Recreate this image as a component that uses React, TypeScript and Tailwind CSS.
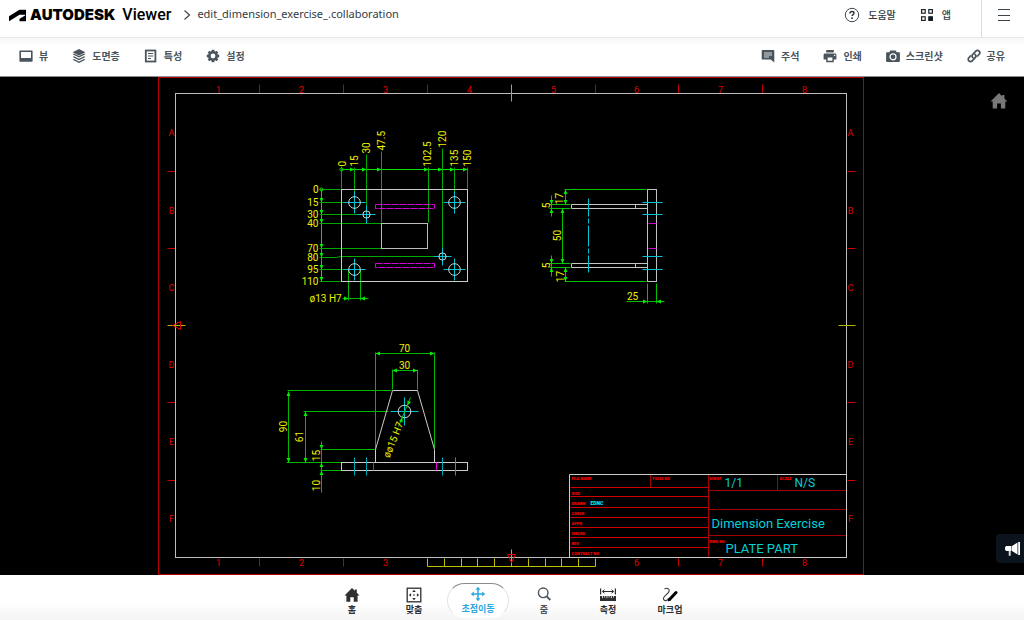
import React from "react";

type Pt = { x: number; y: number };

/* ---------- drawing helpers ---------- */

function Arrow({ x, y, r }: Pt & { r: number }) {
  return <path d="M0 0L-4.5 1.9V-1.9z" transform={`translate(${x} ${y}) rotate(${r})`} className="fill-[#00f000] stroke-none" />;
}

function Dim({ x, y, children, rotate = 0, anchor = "middle" }: Pt & { children: string; rotate?: number; anchor?: "start" | "middle" | "end" }) {
  return (
    <text transform={`translate(${x} ${y}) rotate(${rotate})`} dy="3" textAnchor={anchor} className="fill-[#f0f000] stroke-none font-['Roboto',sans-serif] text-[10px]">
      {children}
    </text>
  );
}

function Hole({ x, y, r, arm }: Pt & { r: number; arm: number }) {
  return (
    <g>
      <path d={`M${x - arm} ${y}H${x + arm}M${x} ${y - arm}V${y + arm}`} className="stroke-[#00c4d0]" />
      <circle cx={x} cy={y} r={r} className="stroke-[#d8d8d8]" />
    </g>
  );
}

const columns = [218, 301, 385, 469, 553, 636, 720, 804];
const rows = [132, 210, 287, 364, 441, 518];
const letters = ["A", "B", "C", "D", "E", "F"];

function SheetFrame() {
  return (
    <g>
      <rect x="158" y="77" width="705" height="497" className="stroke-[#b80000]" />
      <path d="M259 84V93M343 84V93M427 84V93M595 84V93M678 84V93M762 84V93" className="stroke-[#c00000]" />
      <path d="M259 558V566M343 558V566M678 558V566M762 558V566" className="stroke-[#c00000]" />
      <path d="M167 171H175M167 248H175M167 402H175M167 480H175M847 171H855M847 248H855M847 402H855M847 480H855" className="stroke-[#d00000]" />
      <rect x="175" y="93" width="671" height="464" className="stroke-[#bcbcbc]" />
      <path d="M511 84V101M167 325H185M838 325H855M511 549V566" className="stroke-[#b4b400]" />
      <path d="M427 558V566H595V558M444 558V566M461 558V566M477 558V566M494 558V566M528 558V566M545 558V566M561 558V566M578 558V566" className="stroke-[#c0c000]" />
      <path d="M172 325L180 321V329zM511 562L507 554H515z" className="stroke-[#e00000]" />
      <g className="fill-[#e00000] stroke-none font-['Roboto',sans-serif] text-[9px]">
        {columns.map((x, i) => (
          <text key={x} x={x} y="92" textAnchor="middle">{i + 1}</text>
        ))}
        {columns.map((x, i) => (i === 3 || i === 4 ? null : <text key={x} x={x} y="565" textAnchor="middle">{i + 1}</text>))}
        {rows.map((y, i) => (
          <React.Fragment key={y}>
            <text x="171" y={y + 3} textAnchor="middle">{letters[i]}</text>
            <text x="850" y={y + 3} textAnchor="middle">{letters[i]}</text>
          </React.Fragment>
        ))}
      </g>
    </g>
  );
}

function TopView() {
  return (
    <g>
      <path d="M341 169H467M321 189V281" className="stroke-[#00e000]" />
      <path
        d="M341 166V188M354 167V194M366 154V206M381 151V222M428 167V222M442 148V248M454 167V194M467 167V188M319 189H340M319 202H346M319 214H358M319 223H381M319 248H381M319 257H336L340 256H434M319 269H346M319 281H340"
        className="stroke-[#00a800]"
      />
      <path d="M348 269V300M360 269V300M342 298H368" className="stroke-[#00b800]" />
      <circle cx="341" cy="169" r="1.6" className="stroke-[#00e000]" />
      <circle cx="321" cy="189" r="1.6" className="stroke-[#00e000]" />
      {[354, 366, 381, 428, 442, 454, 467].map((x) => <Arrow key={x} x={x} y={169} r={0} />)}
      {[202, 214, 223, 248, 257, 269, 281].map((y) => <Arrow key={y} x={321} y={y} r={90} />)}
      <Arrow x={348} y={298} r={0} />
      <Arrow x={360} y={298} r={180} />
      <rect x="341" y="189" width="126" height="92" className="stroke-[#cccccc]" />
      <rect x="381" y="223" width="46" height="25" className="stroke-[#bcbcbc]" />
      <path d="M375 204H434V208H375zM375 263H434V267H375z" strokeDasharray="7 1" className="stroke-[#d800d8]" />
      <Hole x={354} y={202} r={5.8} arm={11} />
      <Hole x={454} y={202} r={5.8} arm={11} />
      <Hole x={354} y={269} r={5.8} arm={11} />
      <Hole x={454} y={269} r={5.8} arm={11} />
      <Hole x={366} y={214} r={3.6} arm={9} />
      <Hole x={442} y={256} r={3.6} arm={9} />
      <Dim x={342} y={166} rotate={-90} anchor="start">0</Dim>
      <Dim x={354} y={166} rotate={-90} anchor="start">15</Dim>
      <Dim x={366} y={153} rotate={-90} anchor="start">30</Dim>
      <Dim x={381} y={150} rotate={-90} anchor="start">47.5</Dim>
      <Dim x={427} y={166} rotate={-90} anchor="start">102.5</Dim>
      <Dim x={442} y={147} rotate={-90} anchor="start">120</Dim>
      <Dim x={454} y={166} rotate={-90} anchor="start">135</Dim>
      <Dim x={467} y={166} rotate={-90} anchor="start">150</Dim>
      <Dim x={318} y={189} anchor="end">0</Dim>
      <Dim x={318} y={202} anchor="end">15</Dim>
      <Dim x={318} y={214} anchor="end">30</Dim>
      <Dim x={318} y={223} anchor="end">40</Dim>
      <Dim x={318} y={248} anchor="end">70</Dim>
      <Dim x={318} y={257} anchor="end">80</Dim>
      <Dim x={318} y={269} anchor="end">95</Dim>
      <Dim x={318} y={281} anchor="end">110</Dim>
      <Dim x={309} y={298} anchor="start">ø13 H7</Dim>
    </g>
  );
}

function SideView() {
  return (
    <g>
      <path d="M564 189H646M564 281H646M551 195V216M551 255V276M549 204H570M549 208H570M549 263H570M549 267H570M562 208V263M565 189V204M565 267V281M647 283V303M656 283V303M626 301H664" className="stroke-[#00c000]" />
      <Arrow x={565} y={189} r={-90} />
      <Arrow x={565} y={204} r={90} />
      <Arrow x={551} y={204} r={90} />
      <Arrow x={551} y={208} r={-90} />
      <Arrow x={562} y={208} r={-90} />
      <Arrow x={562} y={263} r={90} />
      <Arrow x={551} y={263} r={90} />
      <Arrow x={551} y={267} r={-90} />
      <Arrow x={565} y={267} r={-90} />
      <Arrow x={565} y={281} r={90} />
      <Arrow x={647} y={301} r={0} />
      <Arrow x={656} y={301} r={180} />
      <path d="M571 204H647M571 208H647M571 204V208M635 204V208M571 263H647M571 267H647M571 263V267M635 263V267" className="stroke-[#c4c4c4]" />
      <rect x="647" y="189" width="9" height="92" className="stroke-[#c0c0c0]" />
      <path d="M588 198V216M588 218V223M588 225V246M588 248V253M588 255V272M642 202H662M642 214H662M642 256H662M642 269H662" className="stroke-[#00c4d0]" />
      <path d="M648 223H656M648 248H656" className="stroke-[#d800d8]" />
      <Dim x={559} y={198} rotate={-90}>17</Dim>
      <Dim x={546} y={205} rotate={-90}>5</Dim>
      <Dim x={557} y={235} rotate={-90}>50</Dim>
      <Dim x={546} y={265} rotate={-90}>5</Dim>
      <Dim x={560} y={276} rotate={-90}>17</Dim>
      <Dim x={632} y={296}>25</Dim>
    </g>
  );
}

function FrontView() {
  return (
    <g>
      <path d="M375 353H434M375 352V449M434 352V448M392 370H417M392 369V389M417 369V389M288 391V462M287 390H391M305 411V462M303 411H388M286 462H341M321 441V492M320 449H375M320 470H341" className="stroke-[#00b800]" />
      <Arrow x={375} y={353} r={180} />
      <Arrow x={434} y={353} r={0} />
      <Arrow x={392} y={370} r={180} />
      <Arrow x={417} y={370} r={0} />
      <Arrow x={288} y={391} r={-90} />
      <Arrow x={288} y={462} r={90} />
      <Arrow x={305} y={411} r={-90} />
      <Arrow x={305} y={462} r={90} />
      <Arrow x={321} y={449} r={90} />
      <Arrow x={321} y={462} r={-90} />
      <Arrow x={321} y={470} r={-90} />
      <path d="M375 462V449L392 390H417L434 449V462" className="stroke-[#cccccc]" />
      <rect x="341" y="462" width="126" height="8" className="stroke-[#cccccc]" />
      <Hole x={404} y={411} r={6.3} arm={14} />
      <path d="M398 426L410 397" className="stroke-[#00c800]" />
      <Arrow x={402} y={417} r={-68} />
      <Arrow x={407} y={405} r={112} />
      <path d="M354 457V475M366 457V475M442 457V475M455 457V475" className="stroke-[#00aab4]" />
      <path d="M373 462V470M436 462V470" className="stroke-[#d800d8]" />
      <Dim x={404} y={348}>70</Dim>
      <Dim x={404} y={365}>30</Dim>
      <Dim x={283} y={426} rotate={-90}>90</Dim>
      <Dim x={299} y={436} rotate={-90}>61</Dim>
      <Dim x={316} y={455} rotate={-90}>15</Dim>
      <Dim x={316} y={485} rotate={-90}>10</Dim>
      <Dim x={386} y={457} rotate={-68} anchor="start">øø15 H7</Dim>
    </g>
  );
}

const blockLabels: { x: number; y: number; t: string }[] = [
  { x: 571, y: 479, t: "FILE NAME" },
  { x: 652, y: 479, t: "FSCM NO" },
  { x: 709, y: 479, t: "SHEET" },
  { x: 779, y: 479, t: "SCALE" },
  { x: 571, y: 494, t: "SIZE" },
  { x: 571, y: 504, t: "DRAWN" },
  { x: 571, y: 514, t: "CHECK" },
  { x: 571, y: 524, t: "APPR." },
  { x: 571, y: 534, t: "ISSUED" },
  { x: 571, y: 544, t: "REV" },
  { x: 571, y: 554, t: "CONTRACT NO" },
  { x: 709, y: 542, t: "DWG NO" },
];

function TitleBlock() {
  return (
    <g>
      <path d="M570 487H708M570 496H708M570 507H708M570 517H708M570 527H708M570 537H708M570 547H708" className="stroke-[#d00000]" />
      <path d="M708 474V557M650 474V487M777 474V490M708 490H846M708 509H846M708 535H846" className="stroke-[#a40000]" />
      <path d="M569 557V474H846V557z" className="stroke-[#cccccc]" />
      <g className="fill-[#ff0000] stroke-none font-['Roboto',sans-serif] text-[4px] font-black">
        {blockLabels.map((l) => (
          <text key={l.t} x={l.x} y={l.y}>{l.t}</text>
        ))}
      </g>
      <text x="590" y="504" className="fill-[#00f0f0] stroke-none font-['Roboto',sans-serif] text-[5px] font-black">EDNC</text>
      <g className="fill-[#00d0d8] stroke-none font-['Roboto',sans-serif]">
        <text x="724" y="486" className="text-[12px]">1/1</text>
        <text x="794" y="486" className="text-[12px]">N/S</text>
        <text x="711" y="527" className="text-[13px]">Dimension Exercise</text>
        <text x="725" y="552" className="text-[13px]">PLATE PART</text>
      </g>
    </g>
  );
}

function Drawing() {
  return (
    <svg viewBox="0 77 1024 498" className="h-full w-full" role="img" aria-label="Dimension Exercise">
      <g transform="translate(0.5 0.5)" className="fill-none" strokeWidth="1">
        <SheetFrame />
        <TopView />
        <SideView />
        <FrontView />
        <TitleBlock />
      </g>
    </svg>
  );
}

/* ---------- icons ---------- */

const I = "h-[14px] w-[14px] shrink-0";

const ViewIcon = () => (
  <svg viewBox="0 0 14 14" className={I}><path fillRule="evenodd" d="M1 1.5h12a.6.6 0 0 1 .6.6v10a.6.6 0 0 1-.6.6H1a.6.6 0 0 1-.6-.6v-10a.6.6 0 0 1 .6-.6zM2 3v6h10V3z" fill="currentColor" /></svg>
);
const LayersIcon = () => (
  <svg viewBox="0 0 14 14" className={I} fill="currentColor"><path d="M7 0l6.4 3.2L7 6.4.6 3.2z" /><path d="M.6 5.3L2 4.6l5 2.5 5-2.5 1.4.7L7 8.5z" /><path d="M.6 8L2 7.3l5 2.5 5-2.5 1.4.7L7 11.2z" /><path d="M.6 10.7L2 10l5 2.5 5-2.5 1.4.7L7 13.9z" /></svg>
);
const PropsIcon = () => (
  <svg viewBox="0 0 14 14" className={I} fill="none" stroke="currentColor"><rect x="1.8" y="1.5" width="9.6" height="11" strokeWidth="1.8" /><path d="M4 4.5h5.2M4 7h5.2M4 9.5h3" strokeWidth="1.2" /></svg>
);
const GearIcon = () => (
  <svg viewBox="0 0 14 14" className={I}><g fill="currentColor"><rect x="5.6" y=".8" width="2.8" height="12.4" /><rect x="5.6" y=".8" width="2.8" height="12.4" transform="rotate(45 7 7)" /><rect x="5.6" y=".8" width="2.8" height="12.4" transform="rotate(90 7 7)" /><rect x="5.6" y=".8" width="2.8" height="12.4" transform="rotate(135 7 7)" /><circle cx="7" cy="7" r="4.9" /></g><circle cx="7" cy="7" r="2.4" fill="#fff" /></svg>
);
const CommentIcon = () => (
  <svg viewBox="0 0 14 14" className={I}><path d="M1.4 1h11.2a.7.7 0 0 1 .7.7v11.9L9.6 10.6H1.4a.7.7 0 0 1-.7-.7V1.7a.7.7 0 0 1 .7-.7z" fill="currentColor" /><path d="M3 4h8M3 6h8M3 8h5" stroke="#fff" strokeWidth=".8" /></svg>
);
const PrintIcon = () => (
  <svg viewBox="0 0 14 14" className={I}><path fill="currentColor" fillRule="evenodd" d="M3.2 1h7.6v2.6H3.2zM2 4.4h10c.8 0 1.4.6 1.4 1.4v4.6h-2.6v2.8H3.2v-2.8H.6V5.8C.6 5 1.2 4.4 2 4.4zM4.6 8.6v3.2h4.8V8.6zM11 5.8v1.2h1.2V5.8z" /></svg>
);
const CameraIcon = () => (
  <svg viewBox="0 0 14 14" className={I}><path d="M4.3 1.5h5.4l1 1.7h2.3c.5 0 .9.4.9.9v8c0 .5-.4.9-.9.9H1c-.5 0-.9-.4-.9-.9v-8c0-.5.4-.9.9-.9h2.3z" fill="currentColor" /><circle cx="7" cy="7.8" r="3" fill="none" stroke="#fff" strokeWidth="1.2" /></svg>
);
const LinkIcon = () => (
  <svg viewBox="0 0 14 14" className={I} fill="none" stroke="currentColor" strokeWidth="1.7" strokeLinecap="round"><path d="M5.9 8.7c-1-1-1-2.4-.1-3.3l3-3.2c.9-1 2.400-1 3.300-.1.9.9.9 2.300 0 3.200l-1.500 1.700" /><path d="M8.100 5.300c1 1 1 2.400.1 3.300l-3 3.200c-.9 1-2.400 1-3.300.1-.9-.9-.9-2.300 0-3.200l1.500-1.700" /></svg>
);
const HelpIcon = () => (
  <svg viewBox="0 0 16 16" className="h-4 w-4"><circle cx="8" cy="8" r="6.7" fill="none" stroke="#3c4650" /><path d="M6 6.4c0-1.2.9-1.9 2-1.9s2 .7 2 1.700c0 1.400-1.900 1.500-1.900 2.900" fill="none" stroke="#2c343c" strokeWidth="1.4" /><circle cx="8.1" cy="11.2" r=".9" fill="#2c343c" /></svg>
);
const AppsIcon = () => (
  <svg viewBox="0 0 14 14" className={I} fill="none" stroke="#1c242c" strokeWidth="1.2"><rect x="1.6" y="1.6" width="3.6" height="3.6" /><rect x="8.8" y="1.6" width="3.6" height="3.6" /><rect x="1.6" y="8.8" width="3.6" height="3.6" /><rect x="8.8" y="8.8" width="3.6" height="3.6" fill="#0c141c" /></svg>
);
const HomeShape = ({ className }: { className: string }) => (
  <svg viewBox="0 0 16 16" className={className}><path d="M8 .9L.5 8.5h1.9v6.2h3.900V10.200h3.400v4.500h3.900V8.500h1.900L12.800 5.700V2.600h-2v1.100z" fill="currentColor" /></svg>
);

/* ---------- page parts ---------- */

function ToolButton({ icon, label }: { icon: React.ReactNode; label: string }) {
  return (
    <button type="button" className="flex items-center gap-1.5 text-[10px] leading-4 font-bold text-[#49545c]">
      {icon}
      <span>{label}</span>
    </button>
  );
}

function BottomButton({ icon, label, className = "" }: { icon: React.ReactNode; label: string; className?: string }) {
  return (
    <button type="button" className={`flex h-[35px] w-[62px] flex-col items-center gap-px pt-1 text-[9px] leading-3 font-bold ${className}`}>
      {icon}
      <span>{label}</span>
    </button>
  );
}

const B = "h-4 w-4 shrink-0";

export default function App() {
  return (
    <div className="flex h-screen flex-col overflow-hidden bg-white font-['Noto_Sans','Noto_Sans_CJK_KR',sans-serif] text-[#333b42]">
      <header className="flex h-[38px] shrink-0 items-stretch border-b border-[#e8e8e8] pl-2">
        <a href="#home" aria-label="Autodesk Viewer" className="flex items-center pb-[7px] text-black">
          <svg viewBox="0 3 24 18" className="mr-1 ml-px h-[13px] w-[17px]"><path d="M.129 20.202l14.700-9.136h7.625c.235 0 .445.188.445.445 0 .210-.092.305-.210.375l-7.222 4.323c-.470.283-.633.845-.633 1.265l-.008 2.725H24V4.362a.561.561 0 0 0-.585-.562h-8.752L0 12.893V20.200h.129z" /></svg>
          <span className="font-['Inter',sans-serif] text-[15px] leading-5 font-black">AUTODESK</span>
          <span className="ml-[7px] font-['Roboto',sans-serif] text-base leading-5 font-medium">Viewer</span>
        </a>
        <svg viewBox="0 0 8 12" className="mt-[9px] ml-3 h-3 w-2" fill="none" stroke="#444"><path d="M1.5 1.5L6.5 6l-5 4.5" strokeWidth="1.2" /></svg>
        <h1 className="ml-1.5 pt-1 text-[11px] leading-5">edit_dimension_exercise_.collaboration</h1>
        <nav className="ml-auto flex items-stretch">
          <div className="flex items-center gap-6 pr-[30px] pb-[7px]">
            <button type="button" className="flex items-center gap-2 text-[10px] leading-4 font-medium"><HelpIcon />도움말</button>
            <button type="button" className="flex items-center gap-2 text-[10px] leading-4 font-medium"><AppsIcon />앱</button>
          </div>
          <button type="button" aria-label="메뉴" className="flex w-[43px] items-center justify-center border-l border-[#dcdcdc] pb-[7px] pl-0.5">
            <svg viewBox="0 0 14 14" className="h-[14px] w-[14px]" stroke="#3c444c"><path d="M1 1.5h12M1 7.5h12M1 12.5h12" /></svg>
          </button>
        </nav>
      </header>

      <div className="flex h-[39px] shrink-0 items-center justify-between border-b border-[#8c9090] bg-linear-to-b from-[#f7f7f7] to-white to-20% px-[19px] pb-0.5">
        <div className="flex gap-6">
          <ToolButton icon={<ViewIcon />} label="뷰" />
          <ToolButton icon={<LayersIcon />} label="도면층" />
          <ToolButton icon={<PropsIcon />} label="특성" />
          <ToolButton icon={<GearIcon />} label="설정" />
        </div>
        <div className="flex gap-6">
          <ToolButton icon={<CommentIcon />} label="주석" />
          <ToolButton icon={<PrintIcon />} label="인쇄" />
          <ToolButton icon={<CameraIcon />} label="스크린샷" />
          <ToolButton icon={<LinkIcon />} label="공유" />
        </div>
      </div>

      <main className="relative min-h-0 flex-1 bg-black">
        <Drawing />
        <button type="button" aria-label="홈 뷰" className="absolute top-[15px] right-4 text-[#787878]"><HomeShape className="h-[18px] w-[18px]" /></button>
        <button type="button" aria-label="공지" className="absolute right-0 bottom-3 flex h-[29px] w-7 items-center justify-end rounded-l bg-[#0b141c] pr-0.5">
          <svg viewBox="0 0 18 16" className="h-4 w-[18px]"><path d="M2.5 5h5v5h-5C1.6 10 1 9 1 7.5S1.6 5 2.5 5zM8 5l5.500-3.500v12L8 10zM14.200 1h1.800v13h-1.800z" fill="#fff" /><path d="M4.7 9.5h2v5.3h-2z" fill="#d0d4d8" /></svg>
        </button>
      </main>

      <footer className="flex h-[45px] shrink-0 items-start justify-center bg-linear-to-b from-white from-60% to-[#f4f4f4] pt-2 pr-0.5 text-[#2e2e2e]">
        <BottomButton label="홈" icon={<HomeShape className={B} />} />
        <BottomButton
          label="맞춤"
          icon={<svg viewBox="0 0 16 16" className={B}><rect x="1.2" y="1.2" width="13.6" height="13.6" fill="none" stroke="currentColor" strokeWidth="1.3" /><path d="M8 2.8l1.800 2.300H6.200zM8 13.200l1.800-2.300H6.200zM2.800 8l2.300-1.800v3.600zM13.200 8l-2.300-1.800v3.600z" fill="currentColor" /><circle cx="8" cy="8" r=".8" fill="currentColor" /></svg>}
        />
        <BottomButton
          className="mx-0.5 rounded-[20px] border border-[#e4e4e4] border-t-[#8c8c8c] border-b-transparent bg-white !pt-0.5 text-[#2ea6df]"
          label="초점이동"
          icon={<svg viewBox="0 0 16 16" className={B}><path d="M8 2v12M2 8h12" stroke="currentColor" strokeWidth="1.5" /><path d="M8 .8l2.500 3H5.500zM8 15.200l2.500-3H5.500zM.8 8l3-2.500v5zM15.200 8l-3-2.500v5z" fill="currentColor" /></svg>}
        />
        <BottomButton
          className="mx-0.5 text-[#4a545c]"
          label="줌"
          icon={<svg viewBox="0 0 16 16" className={B} fill="none" stroke="currentColor"><circle cx="7.2" cy="5.8" r="4.8" strokeWidth="1.4" /><path d="M10.700 9.400l3.600 3.600" strokeWidth="1.8" /></svg>}
        />
        <BottomButton
          label="측정"
          icon={<svg viewBox="0 0 16 16" className={B} fill="none" stroke="currentColor"><path d="M.6 1.5v6M15.4 1.5v6" strokeWidth="1.2" /><path d="M3 4.5h10M4.5 2.8L2.3 4.500l2.200 1.700M11.500 2.800l2.200 1.700-2.200 1.700" /><path d="M0 9h16v5H0z" className="fill-current stroke-none" /><path d="M2.5 9v2.200M4.700 9v1.500M6.900 9v2.200M9.100 9v1.500M11.300 9v2.200M13.500 9v1.500" stroke="#fff" strokeWidth=".8" /></svg>}
        />
        <BottomButton
          label="마크업"
          icon={<svg viewBox="0 0 16 16" className={B} fill="none"><path d="M2.5 2C5.5.3 8 2 7 4.500S.7 9.500 1.500 12s4 2 5-.5" stroke="#3c3c3c" strokeWidth="1.1" /><path d="M7.500 12.500L14 5.500" stroke="#000" strokeWidth="3" strokeLinecap="round" /><path d="M5.800 14.500l.7-2.800 2 1.900z" fill="#000" /></svg>}
        />
      </footer>
    </div>
  );
}
